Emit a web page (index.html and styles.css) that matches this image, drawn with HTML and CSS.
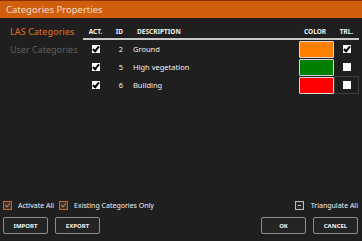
FILE: index.html
```html
<!DOCTYPE html>
<html lang="en">
<head>
    <meta charset="UTF-8">
    <title>Categories Properties</title>
    <link rel="stylesheet" href="styles.css">
</head>
<body>
    <div class="window">
        <div class="titlebar">Categories Properties</div>
        <div class="content">
            <ul class="nav">
                <li class="active">LAS Categories</li>
                <li>User Categories</li>
            </ul>
            <div class="grid">
                <div class="row head">
                    <span class="c-act">ACT.</span>
                    <span class="c-id">ID</span>
                    <span class="c-desc">DESCRIPTION</span>
                    <span class="c-color">COLOR</span>
                    <span class="c-trl">TRL.</span>
                </div>
                <div class="row">
                    <span class="c-act"><i class="box checked"></i></span>
                    <span class="c-id">2</span>
                    <span class="c-desc">Ground</span>
                    <span class="c-color"><i class="swatch" style="background:#ff8000"></i></span>
                    <span class="c-trl"><i class="box checked"></i></span>
                </div>
                <div class="row">
                    <span class="c-act"><i class="box checked"></i></span>
                    <span class="c-id">5</span>
                    <span class="c-desc">High vegetation</span>
                    <span class="c-color"><i class="swatch" style="background:#008000"></i></span>
                    <span class="c-trl"><i class="box"></i></span>
                </div>
                <div class="row">
                    <span class="c-act"><i class="box checked"></i></span>
                    <span class="c-id">6</span>
                    <span class="c-desc">Building</span>
                    <span class="c-color"><i class="swatch" style="background:#ff0000"></i></span>
                    <span class="c-trl focused"><i class="box"></i></span>
                </div>
            </div>
        </div>
        <div class="options">
            <label class="opt"><i class="obox checked"></i>Activate All</label>
            <label class="opt"><i class="obox checked"></i>Existing Categories Only</label>
            <label class="opt right"><i class="obox mixed"></i>Triangulate All</label>
        </div>
        <div class="buttons">
            <button>IMPORT</button>
            <button>EXPORT</button>
            <span class="spacer"></span>
            <button>OK</button>
            <button>CANCEL</button>
        </div>
    </div>
</body>
</html>
```

FILE: styles.css
```css
body {
    margin: 0;
    background: #1e1e1e;
    font-family: "Noto Sans", "Open Sans", sans-serif;
}
.window {
    width: 362px;
    height: 241px;
    background: #1f1f1f;
    display: flex;
    flex-direction: column;
    color: #f0f0f0;
}
.titlebar {
    height: 17px;
    border-top: 1px solid #8a3206;
    background: #d05e0c;
    color: #f7dcc8;
    font-size: 9.5px;
    line-height: 17px;
    padding-left: 6px;
}
.content {
    display: flex;
    height: 76px;
}
.nav {
    list-style: none;
    margin: 0;
    padding: 5px 0 0 10px;
    width: 73px;
}
.nav li {
    height: 18px;
    line-height: 18px;
    font-size: 9px;
    color: #5e5e5e;
    white-space: nowrap;
}
.nav li.active {
    color: #d4661c;
    font-weight: 500;
}
.grid {
    flex: 1;
    padding: 6px 3px 0 0;
}
.row {
    display: grid;
    grid-template-columns: 25px 15px 1fr 38px 25px;
    height: 18px;
    align-items: center;
    font-size: 7.5px;
}
.row.head {
    height: 14px;
    border-bottom: 2px solid #c8c8c8;
    font-size: 6.5px;
    font-weight: bold;
}
.c-act, .c-trl, .c-color {
    display: flex;
    justify-content: center;
    align-items: center;
    height: 100%;
}
.c-id {
    text-align: right;
}
.c-desc {
    padding-left: 10px;
}
.head .c-desc {
    padding-left: 14px;
}
.focused {
    box-sizing: border-box;
    border: 1px solid #3e3e3e;
}
.box {
    width: 8px;
    height: 8px;
    background: #ffffff;
    position: relative;
}
.box.checked::after {
    content: "";
    position: absolute;
    left: 2.5px;
    top: 0px;
    width: 2px;
    height: 5px;
    border: solid #000;
    border-width: 0 2px 2px 0;
    transform: rotate(40deg);
}
.swatch {
    width: 33px;
    height: 15px;
    border: 1px solid #d8d8d8;
    border-radius: 1px;
    margin-left: 2px;
}
.options {
    display: flex;
    align-items: center;
    height: 9px;
    margin-top: 107px;
    padding: 0 4px 0 3px;
    font-size: 7px;
}
.opt {
    display: flex;
    align-items: center;
    margin-right: 5px;
    white-space: nowrap;
}
.opt.right {
    margin-left: auto;
    margin-right: 0;
}
.obox {
    box-sizing: border-box;
    width: 9px;
    height: 9px;
    margin-right: 6px;
    border: 1px solid #c9671f;
    background: #3a3230;
    position: relative;
}
.obox.checked::after {
    content: "";
    position: absolute;
    left: 2px;
    top: 0px;
    width: 2px;
    height: 4px;
    border: solid #d6782e;
    border-width: 0 1.5px 1.5px 0;
    transform: rotate(40deg);
}
.obox.mixed {
    border-color: #bcbcbc;
    background: #2a2a2a;
    margin-right: 7px;
}
.obox.mixed::after {
    content: "";
    position: absolute;
    left: 2px;
    top: 3px;
    width: 3px;
    height: 1px;
    background: #bcbcbc;
}
.buttons {
    display: flex;
    gap: 7px;
    margin-top: 7px;
    padding: 0 4px 0 3px;
}
.spacer {
    flex: 1;
}
button {
    width: 45px;
    height: 17px;
    padding: 0;
    background: #242424;
    border: 1px solid #8c8c8c;
    border-radius: 2px;
    color: #f4f4f4;
    font-family: "Noto Sans", sans-serif;
    font-size: 6px;
    font-weight: bold;
}
```
